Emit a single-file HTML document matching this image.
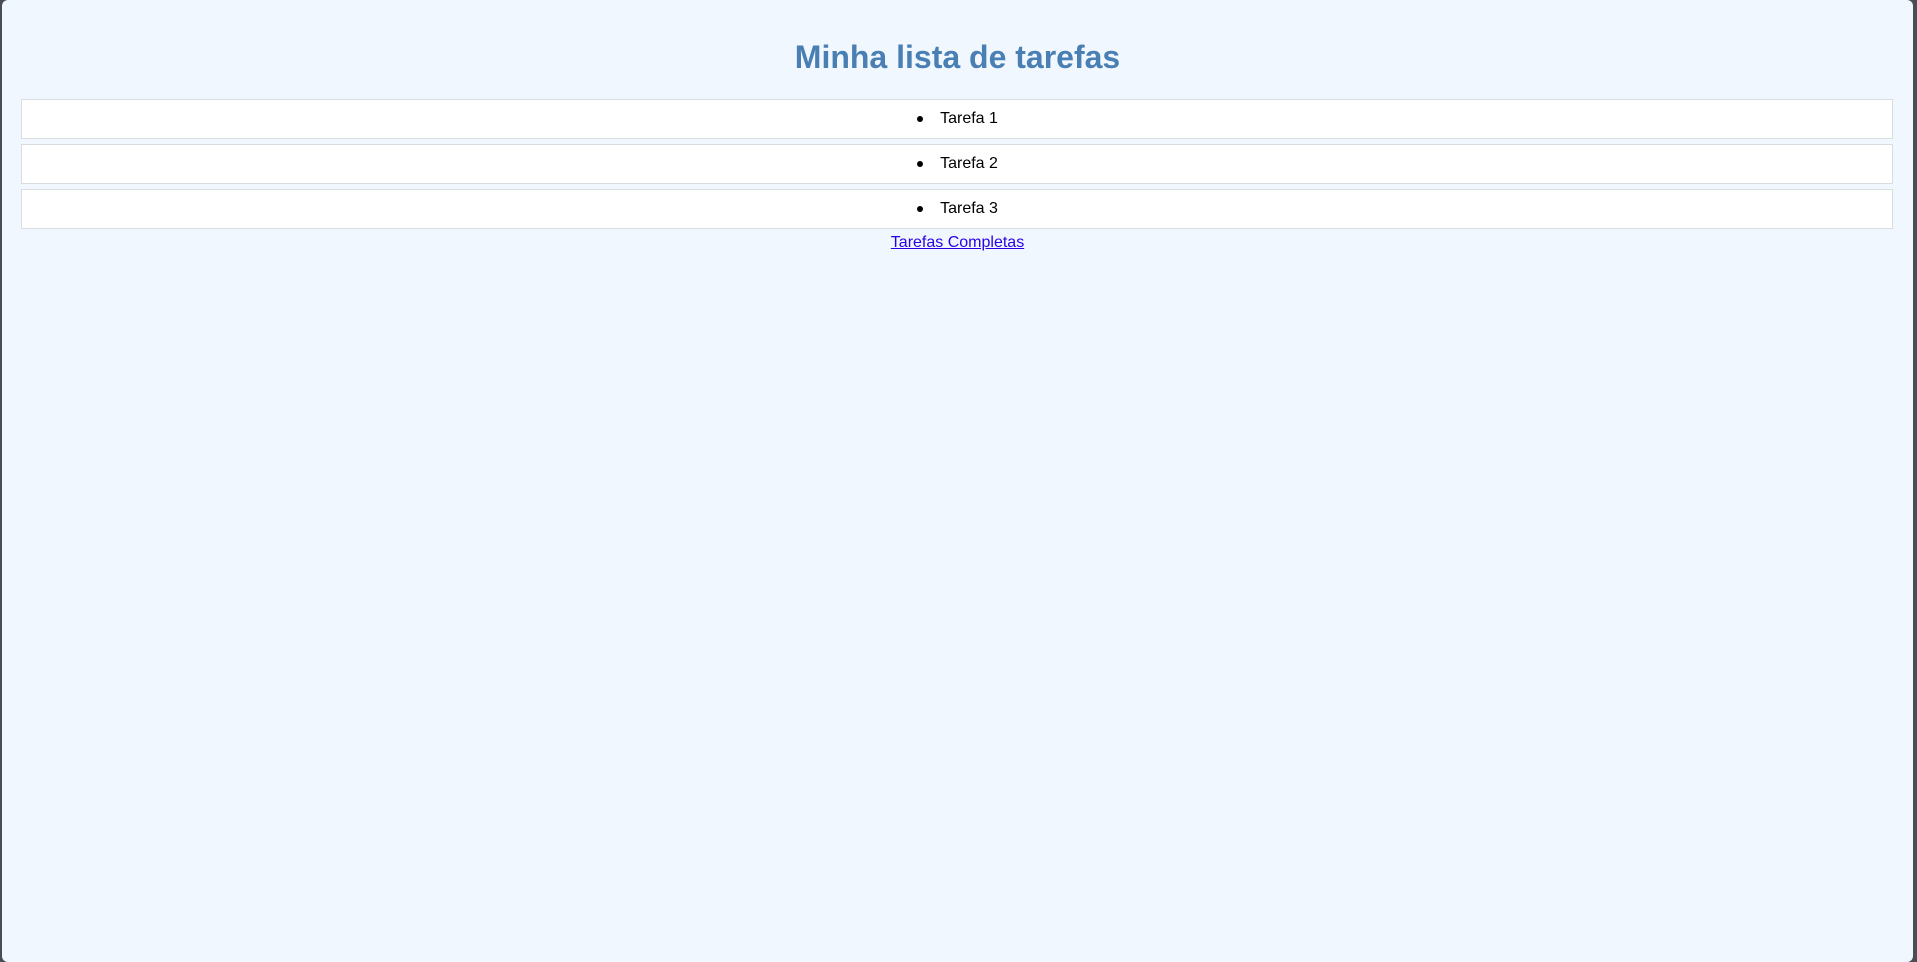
<!DOCTYPE html>
<html><head><meta charset="utf-8"><style>
html,body{margin:0;padding:0;width:1917px;height:962px;overflow:hidden;background:#4a4d55;}
.page{position:absolute;left:2px;top:0;width:1911px;height:962px;background:#f0f7fe;border-radius:6px;font-family:"Liberation Sans",Arial,sans-serif;}
h1{position:absolute;left:0;right:0;top:0;margin:0;text-align:center;font-size:32px;font-weight:bold;color:#4a7fb4;line-height:37px;padding-top:39px;}
.li{position:absolute;left:19px;width:1870px;height:38px;background:#fff;border:1px solid #d9dde2;font-size:16px;line-height:38px;text-align:center;color:#000;}
.li span{display:inline-block;position:relative;left:12px;}
.li span::before{content:"";position:absolute;left:-23px;top:16px;width:6px;height:6px;border-radius:50%;background:#000;}
a{position:absolute;left:0;right:0;top:233px;text-align:center;font-size:16px;line-height:19px;color:#2a00e6;}
a span{text-decoration:underline;}
</style></head><body><div class="page">
<h1>Minha lista de tarefas</h1>
<div class="li" style="top:99px"><span>Tarefa 1</span></div>
<div class="li" style="top:144px"><span>Tarefa 2</span></div>
<div class="li" style="top:189px"><span>Tarefa 3</span></div>
<a><span>Tarefas Completas</span></a>
</div></body></html>
